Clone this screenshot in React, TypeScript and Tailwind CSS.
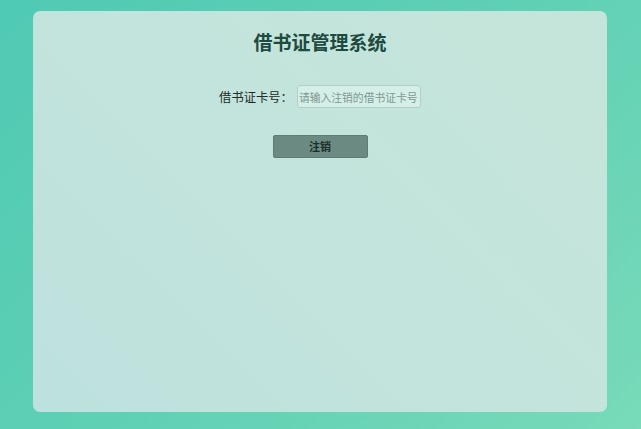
export default function App() {
  return (
    <div
      className="w-[641px] h-[429px] flex pt-[11px] pl-[33px] bg-[linear-gradient(135deg,#4fcab4_0%,#5fd0b4_50%,#78dab9_100%)]"
      style={{ fontFamily: '"Microsoft YaHei", "Noto Sans CJK SC", sans-serif' }}
    >
      <div className="w-[574px] h-[401px] rounded-[7px] bg-[linear-gradient(45deg,#bde1de_0%,#c3e4dc_50%,#c5e5da_100%)] flex flex-col items-center pt-[18px]">
        <h1 className="text-[19px] font-bold text-[#1e4a40] leading-[26px]">借书证管理系统</h1>
        <div className="flex items-center mt-[30px] ml-[0px]">
          <span className="text-[12.3px] text-[#1d2b28] leading-[18px]">借书证卡号：</span>
          <input
            placeholder="请输入注销的借书证卡号"
            className="ml-[4px] w-[124px] h-[23px] rounded-[3px] border border-[#b6cdc6] bg-[#d3efe7] pl-[1px] pr-0 text-[10.8px] placeholder:text-[#7f9792] outline-none"
          />
        </div>
        <button className="mt-[27px] w-[95px] h-[23px] rounded-[2px] bg-[#6a8a82] border border-[#5d7c74] text-[11px] font-bold text-[#1b2e29]">
          注销
        </button>
      </div>
    </div>
  );
}
